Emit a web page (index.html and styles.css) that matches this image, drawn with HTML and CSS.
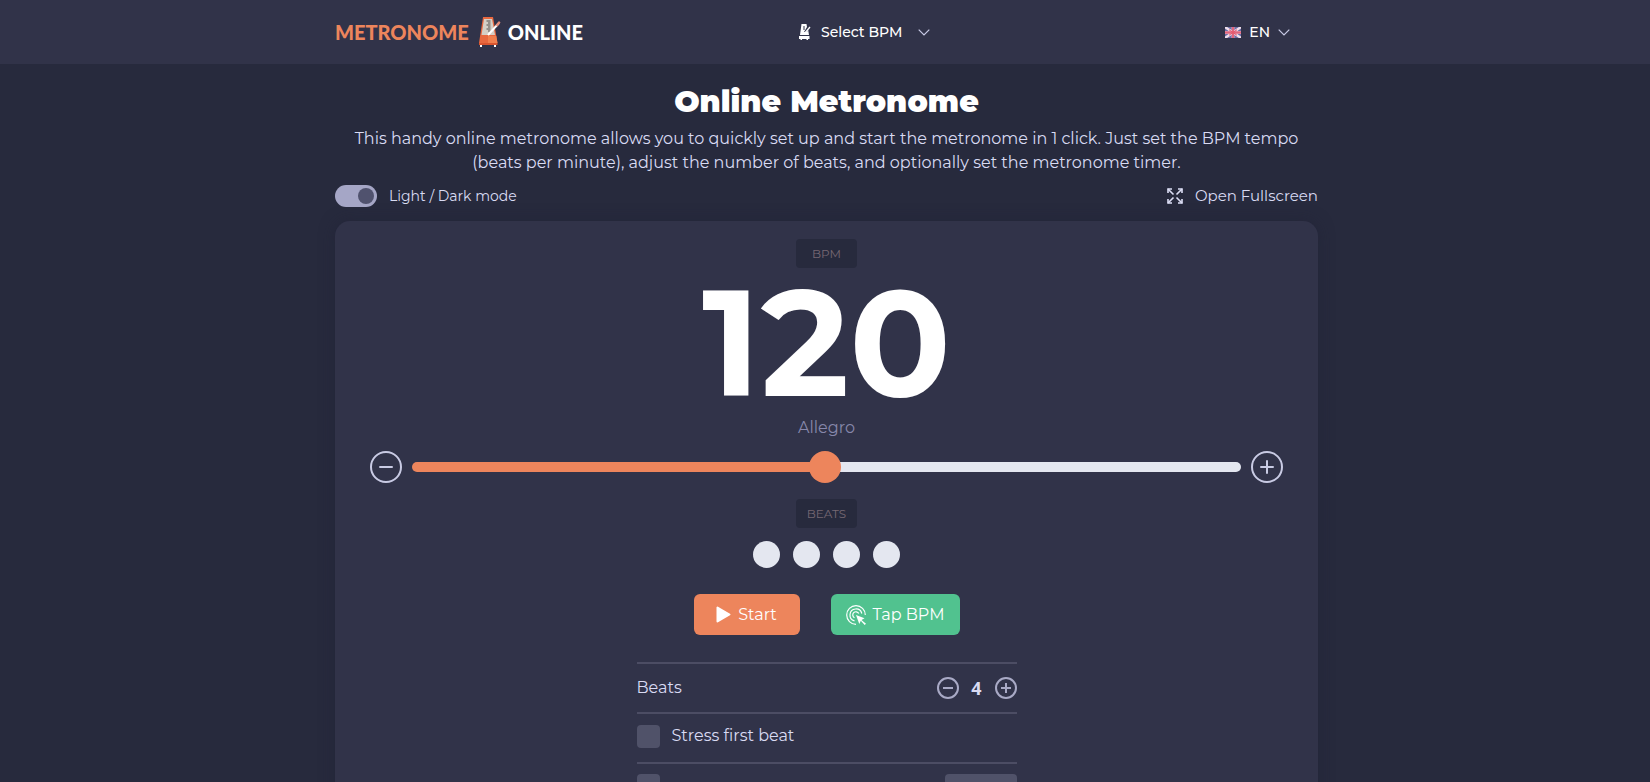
FILE: index.html
```html
<!DOCTYPE html>
<html lang="en">
<head>
	<meta charset="utf-8">
	<title>Online Metronome</title>
	<link rel="stylesheet" href="styles.css">
</head>
<body>
	<header class="header">
		<div class="container header-row">
			<a class="logo" href="#">
				<span class="logo-accent">METRONOME</span>
				<svg class="logo-icon" width="22" height="30" viewBox="0 0 22 30">
					<path d="M4 0h10l4.500 26H0z" fill="#e8683f"/>
					<path d="M9 19h8.300l1.200 7H9z" fill="#f07f4e"/>
					<path d="M5 2h8l3 16H2.500z" fill="#d5cfc6"/>
					<path d="M7.500 4h4M9 6h2.500M7.500 8h4M9 10h2.500M7.500 12h4M9 14h2.500" stroke="#55504f"/>
					<path d="M9 18L20 6" stroke="#fff" stroke-width="2"/>
					<path d="M16.500 8l3.500-4 1.500 1.500-3 4z" fill="#e98d79"/>
					<path d="M0 26h18.500v2H0z" fill="#d9552f"/>
					<path d="M1 28h2v2H1zM15 28h2v2h-2z" fill="#fff"/>
				</svg>
				<span>ONLINE</span>
			</a>
			<button class="menu-btn" type="button">
				<svg width="12" height="16" viewBox="0 0 12 16">
					<path d="M2.500 0h5L8 3l-3 5h3l1-3 1 6H1z" fill="#fff"/>
					<path d="M4 3h2M4 5h2" stroke="#313347"/>
					<path d="M5.500 9.500L11 3" stroke="#fff" stroke-width="1.300"/>
					<path d="M0 12h10.500v3H9v1H7.500v-1H3v1H1.500v-1H0z" fill="#fff"/>
				</svg>
				<span class="menu-text">Select BPM</span>
				<svg width="12" height="7" viewBox="0 0 12 7"><path d="M.7.7L6 6 11.300.7" fill="none" stroke="#c9cbe6" stroke-width="1.200"/></svg>
			</button>
			<button class="lang-btn" type="button">
				<svg width="16" height="11" viewBox="0 0 16 11">
					<path d="M0 0h16v11H0z" fill="#6b6da6"/>
					<path d="M0 0l16 11M16 0L0 11" stroke="#f0dfea" stroke-width="2.400"/>
					<path d="M8 0v11M0 5.500h16" stroke="#e0a0b8" stroke-width="3"/>
					<path d="M8 0v11M0 5.500h16" stroke="#e2667c" stroke-width="2"/>
					<path d="M4 2.700l8 5.600M12 2.700L4 8.300" stroke="#e8566c" stroke-width="1"/>
				</svg>
				<span>EN</span>
				<svg width="12" height="7" viewBox="0 0 12 7"><path d="M.7.7L6 6 11.300.7" fill="none" stroke="#c9cbe6" stroke-width="1.200"/></svg>
			</button>
		</div>
	</header>

	<main class="container">
		<h1>Online Metronome</h1>
		<p class="intro">This handy online metronome allows you to quickly set up and start the metronome in 1 click. Just set the BPM tempo<br>(beats per minute), adjust the number of beats, and optionally set the metronome timer.</p>

		<div class="toolbar">
			<label class="mode" for="mode">
				<input type="checkbox" id="mode" class="switch" checked>
				Light / Dark mode
			</label>
			<button class="fullscreen" type="button">
				<svg width="16" height="16" viewBox="0 0 16 16" fill="none" stroke="#dcdef5" stroke-width="1.600">
					<path d="M1 5V1h4M11 1h4v4M15 11v4h-4M5 15H1v-4"/>
					<path d="M1 1l5.500 5.500M15 1L9.500 6.500M15 15L9.500 9.500M1 15l5.500-5.500"/>
				</svg>
				Open Fullscreen
			</button>
		</div>

		<div class="card">
			<label class="badge" for="bpm">BPM</label>
			<input class="bpm" type="text" id="bpm" name="bpm" value="120">
			<div class="tempo">Allegro</div>

			<div class="slider-row">
				<button class="round-btn" type="button" aria-label="Decrease BPM">
					<svg width="32" height="32" viewBox="0 0 32 32"><circle cx="16" cy="16" r="15"/><path d="M10 16h12"/></svg>
				</button>
				<input class="slider" type="range" aria-label="BPM" min="1" max="240" value="120">
				<button class="round-btn" type="button" aria-label="Increase BPM">
					<svg width="32" height="32" viewBox="0 0 32 32"><circle cx="16" cy="16" r="15"/><path d="M10 16h12M16 10v12"/></svg>
				</button>
			</div>

			<div class="badge">BEATS</div>
			<div class="dots">
				<span class="dot"></span>
				<span class="dot"></span>
				<span class="dot"></span>
				<span class="dot"></span>
			</div>

			<div class="actions">
				<button class="btn btn-start" type="button">
					<svg width="15" height="17" viewBox="0 0 15 17"><path d="M1.500 1.500v14l12-7z" fill="#fff" stroke="#fff" stroke-width="2" stroke-linejoin="round"/></svg>
					Start
				</button>
				<button class="btn btn-tap" type="button">
					<svg width="20" height="20" viewBox="0 0 20 20" fill="none" stroke="#fff" stroke-width="1.200">
						<path d="M10 19.300A9.300 9.300 0 1 1 19.300 10"/>
						<path d="M8.500 15.800A6 6 0 1 1 15.800 8.500"/>
						<path d="M8.500 12.800A3.200 3.200 0 1 1 12.800 8.500"/>
						<path d="M10 10l8.500 3.300-3 1.700 4.500 3.700-1.300 1.300-3.900-4.300L13.300 19z" fill="#fff" stroke="none"/>
					</svg>
					Tap BPM
				</button>
			</div>

			<div class="options">
				<div class="option option-beats">
					<label for="beats">Beats</label>
					<div class="counter">
						<button class="small-btn" type="button" aria-label="Fewer beats">
							<svg width="22" height="22" viewBox="0 0 22 22"><circle cx="11" cy="11" r="10"/><path d="M6 11h10"/></svg>
						</button>
						<input class="count" type="text" id="beats" name="beats" value="4">
						<button class="small-btn" type="button" aria-label="More beats">
							<svg width="22" height="22" viewBox="0 0 22 22"><circle cx="11" cy="11" r="10"/><path d="M6 11h10M11 6v10"/></svg>
						</button>
					</div>
				</div>
				<div class="option">
					<label class="check" for="stress">
						<input type="checkbox" id="stress" class="box">
						Stress first beat
					</label>
				</div>
				<div class="option option-timer">
					<input type="checkbox" id="timer" class="box" aria-label="Timer">
					<input type="text" class="time" aria-label="Timer length">
				</div>
			</div>
		</div>
	</main>
</body>
</html>
```

FILE: styles.css
```css
* {
    box-sizing: border-box;
}

body {
    margin: 0;
    background-color: #272a3d;
    color: #d9dbf3;
    font-family: Montserrat, Inter, sans-serif;
    font-size: 16px;
    line-height: 24px;
}

/* no scrollbar, the page still scrolls */
html {
    scrollbar-width: none;
}

button, input {
    margin: 0;
    padding: 0;
    border: none;
    background: none;
    color: inherit;
    font: inherit;
}

button {
    display: flex;
    align-items: center;
    cursor: pointer;
}

.container {
    max-width: 986px;
    margin: 0 auto;
    padding-left: 3px;
}

/* header */
.header {
    background-color: #313349;
}

.header-row {
    display: grid;
    grid-template-columns: 464px 1fr auto;
    align-items: center;
    height: 64px;
    padding-right: 28px;
}

.logo {
    display: flex;
    align-items: center;
    color: #fff;
    font-family: Lato, sans-serif;
    font-size: 20px;
    font-weight: 900;
    text-decoration: none;
}

.logo-accent {
    color: #ed855c;
}

.logo-icon {
    margin: 0 7px 0 10px;
}

.menu-btn, .lang-btn {
    color: #fff;
    font-size: 14px;
    font-weight: 500;
}

.menu-text {
    margin: 0 16px 0 10px;
}

.lang-btn {
    gap: 8px;
}

/* intro */
h1 {
    margin: 19px 0 7px;
    color: #fff;
    font-size: 30px;
    font-weight: 900;
    line-height: 37px;
    text-align: center;
}

.intro {
    margin: 0;
    text-align: center;
}

.toolbar {
    display: flex;
    justify-content: space-between;
    align-items: center;
    height: 22px;
    margin: 10px 0 14px;
}

.mode {
    display: flex;
    align-items: center;
    gap: 12px;
    font-size: 14px;
}

.switch {
    appearance: none;
    display: flex;
    justify-content: flex-end;
    width: 42px;
    height: 22px;
    padding: 3px;
    border-radius: 11px;
    background-color: #a5a6c6;
}

.switch::before {
    content: "";
    width: 16px;
    height: 16px;
    border-radius: 50%;
    background-color: #50526e;
}

.fullscreen {
    gap: 12px;
    font-size: 15px;
}

/* metronome */
.card {
    display: flex;
    flex-direction: column;
    align-items: center;
    padding: 18px 35px 40px;
    border-radius: 15px;
    background-color: #313349;
    box-shadow: 0 0 15px rgba(32, 34, 54, 0.5);
}

.badge {
    width: 61px;
    border-radius: 4px;
    background-color: #272a3d;
    color: #766873;
    font-size: 12px;
    line-height: 29px;
    text-align: center;
}

.bpm {
    width: 300px;
    height: 148px;
    color: #fff;
    font-size: 150px;
    font-weight: 700;
    text-align: center;
}

.tempo {
    color: #8788ab;
}

.slider-row {
    display: flex;
    align-items: center;
    gap: 10px;
    width: 100%;
    margin: 11px 0 16px;
}

.round-btn {
    fill: none;
    stroke: #c9cbe4;
    stroke-width: 2;
    stroke-linecap: round;
}

.slider {
    appearance: none;
    flex: 1;
    height: 10px;
    border-radius: 5px;
    background: linear-gradient(to right, #ed855c 50%, #e4e7f0 50%);
}

.slider::-webkit-slider-thumb {
    appearance: none;
    width: 32px;
    height: 32px;
    border-radius: 50%;
    background-color: #ed855c;
}

.dots {
    display: flex;
    gap: 13px;
    margin: 13px 0 26px;
}

.dot {
    width: 27px;
    height: 27px;
    border-radius: 50%;
    background-color: #e4e7f0;
}

.actions {
    display: flex;
    gap: 31px;
    margin-bottom: 27px;
}

.btn {
    justify-content: center;
    gap: 7px;
    height: 41px;
    border-radius: 6px;
    color: #fff;
}

.btn-start {
    width: 106px;
    background-color: #ed855c;
}

.btn-tap {
    width: 129px;
    background-color: #51c28f;
}

/* options */
.options {
    width: 100%;
    max-width: 380px;
}

.option {
    min-height: 50px;
    padding-top: 10px;
    border-top: 2px solid #4c4d64;
}

.option-beats {
    display: flex;
    justify-content: space-between;
    align-items: center;
    padding-top: 0;
}

.counter {
    display: flex;
    align-items: center;
}

.small-btn {
    fill: none;
    stroke: #a9aac6;
    stroke-width: 2;
}

.count {
    width: 36px;
    font-family: "Open Sans", sans-serif;
    font-size: 18px;
    font-weight: 700;
    text-align: center;
}

.check {
    display: flex;
    align-items: center;
    gap: 12px;
}

.box {
    appearance: none;
    width: 23px;
    height: 23px;
    border-radius: 4px;
    background-color: #505269;
}

.option-timer {
    display: flex;
    justify-content: space-between;
    align-items: flex-start;
}

.time {
    width: 72px;
    height: 30px;
    border-radius: 4px;
    background-color: #505269;
}
```
